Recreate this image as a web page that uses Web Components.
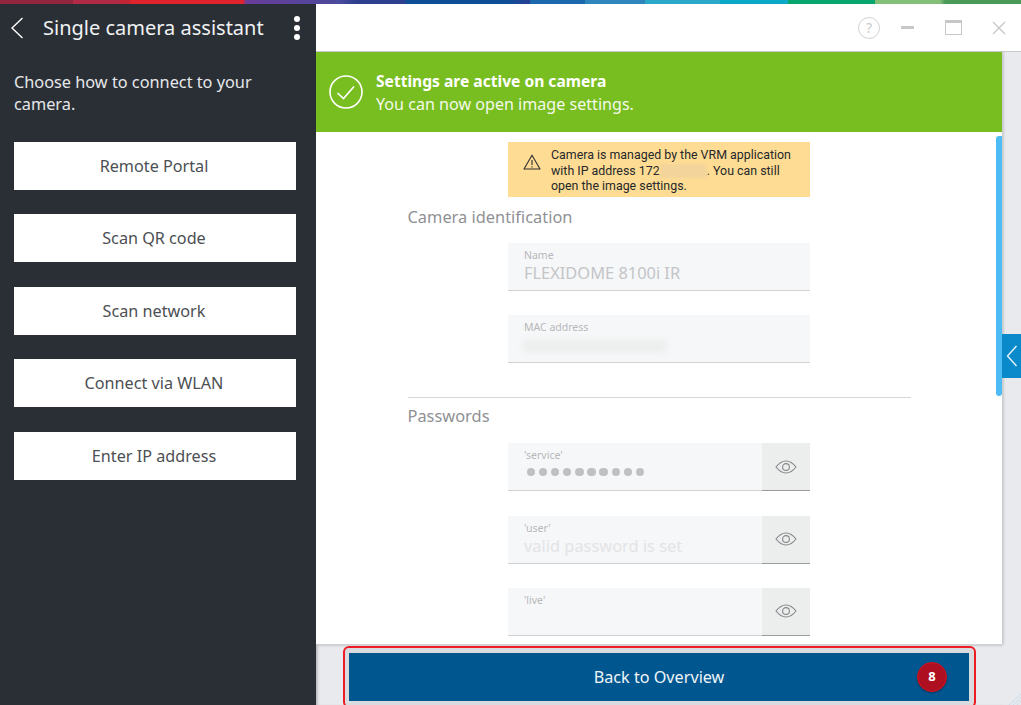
<!DOCTYPE html>
<html lang="en">
<head>
<meta charset="utf-8">
<title>Single camera assistant</title>
<style>
html, body { margin: 0; height: 100%; }
body { width: 1021px; height: 705px; overflow: hidden; font-family: "Noto Sans", "Open Sans", sans-serif; background: #fff; }
</style>
</head>
<body>
<app-shell>
  <side-panel slot="side" heading="Single camera assistant">
    <connect-button>Remote Portal</connect-button>
    <connect-button>Scan QR code</connect-button>
    <connect-button>Scan network</connect-button>
    <connect-button>Connect via WLAN</connect-button>
    <connect-button>Enter IP address</connect-button>
  </side-panel>
  <window-bar slot="bar"></window-bar>
  <status-banner slot="banner" title-text="Settings are active on camera">You can now open image settings.</status-banner>
  <section-form slot="content">
    <warning-note>Camera is managed by the VRM application<br>with IP address 172<span class="ip"></span>. You can still<br>open the image settings.</warning-note>
    <section-title>Camera identification</section-title>
    <form-field label="Name" value="FLEXIDOME 8100i IR"></form-field>
    <form-field label="MAC address" blurred></form-field>
    <section-rule></section-rule>
    <section-title second>Passwords</section-title>
    <form-field label="'service'" dots eye></form-field>
    <form-field label="'user'" value="valid password is set" faint eye></form-field>
    <form-field label="'live'" eye></form-field>
  </section-form>
  <footer-bar slot="footer" count="8">Back to Overview</footer-bar>
</app-shell>

<script>
// Icons used more than once
const eyeIcon = `<svg width="22" height="14" viewBox="0 0 22 14" fill="none" stroke="#85878a" stroke-width="1.1">
  <path d="M1 7 C4.5 2.5 7.5 1 11 1 C14.5 1 17.5 2.5 21 7 C17.5 11.5 14.5 13 11 13 C7.5 13 4.5 11.5 1 7 Z"/>
  <circle cx="11" cy="7" r="3.4"/>
</svg>`;

class AppShell extends HTMLElement {
    constructor() {
        super();
        this.attachShadow({ mode: 'open' });
        this.shadowRoot.innerHTML = /*html*/`
        <style>
        :host { display: block; width: 1021px; height: 705px; position: relative; overflow: hidden; }
        .strip {
            height: 4px;
            background: linear-gradient(90deg,
                #93263f 0, #93263f 73px, #b02a45 73px, #b02a45 120px, #c02535 120px, #c02535 130px,
                #e0242e 130px, #e0242e 243px, #6a3d9a 246px, #4a4a9c 340px, #2f3f8f 355px, #2f3f8f 405px,
                #0f4d94 405px, #0f4d94 508px, #263f94 530px, #1c68ad 530px, #1c68ad 585px, #2f86bc 585px, #2f86bc 645px,
                #2ba7c9 645px, #2ba7c9 720px, #0ba8c8 720px, #0ba8c8 788px, #08a66f 788px, #08a66f 875px,
                #84bf78 875px, #84bf78 940px, #4b9a5a 945px, #4b9a5a 1021px);
        }
        .body { display: flex; height: 701px; }
        .side { width: 316px; flex: none; }
        .main { flex: 1; display: flex; flex-direction: column; min-width: 0; background: #e9eaee; position: relative; box-shadow: inset 3px 0 3px -2px #b9bbbe; }
        .bar { height: 47px; flex: none; background: #fff; border-bottom: 1px solid #c8c9cb; }
        .panel { width: 686px; flex: 1; display: flex; flex-direction: column; min-height: 0; background: #fff; box-shadow: 2px 0 2px #c9cbce; position: relative; }
        .content { flex: 1; min-height: 0; overflow: hidden; }
        .foot { height: 61px; flex: none; margin-top: -1px; position: relative; }
        .thumb { position: absolute; left: 680px; top: 84px; width: 6px; height: 260px; border-radius: 3px 0 3px 3px; background: #4dbcf5; }
        .tab { position: absolute; right: 0; top: 330px; width: 19px; height: 44px; background: #0a8acb; display: flex; align-items: center; justify-content: center; }
        .grip { position: absolute; right: 0; bottom: 0; }
        </style>
        <div class="strip"></div>
        <div class="body">
            <div class="side"><slot name="side"></slot></div>
            <div class="main">
                <div class="bar"><slot name="bar"></slot></div>
                <div class="panel">
                    <slot name="banner"></slot>
                    <div class="content"><slot name="content"></slot></div>
                    <div class="thumb"></div>
                </div>
                <div class="foot"><slot name="footer"></slot></div>
                <div class="tab">
                    <svg width="12" height="22" viewBox="0 0 12 22" fill="none" stroke="#e8f4fb" stroke-width="1.4"><path d="M10.5 1 L1.5 11 L10.5 21"/></svg>
                </div>
                <svg class="grip" width="12" height="11" viewBox="0 0 12 11" stroke="#c9dcec" stroke-width="1"><path d="M0 11 L12 0 M4 11 L12 3.5 M8 11 L12 7"/></svg>
            </div>
        </div>`;
    }
}

class SidePanel extends HTMLElement {
    constructor() {
        super();
        this.attachShadow({ mode: 'open' });
    }

    connectedCallback() {
        this.shadowRoot.innerHTML = /*html*/`
        <style>
        :host { display: block; height: 100%; background: #2a2f36; color: #f1f2f3; }
        header { display: flex; align-items: center; height: 48px; padding: 0 14px 0 10px; }
        header svg.back { flex: none; }
        h1 { flex: 1; margin: -2px 0 0 19px; font-size: 20px; font-weight: 400; white-space: nowrap; }
        .more { display: flex; flex-direction: column; gap: 3px; width: 6px; margin-right: 2px; }
        .more i { width: 6px; height: 6px; border-radius: 50%; background: #fff; }
        p { margin: 20px 14px 0; font-size: 16.3px; line-height: 21.7px; color: #e6e7e9; }
        .list { display: flex; flex-direction: column; gap: 24.4px; margin: 26.6px 20px 0 14px; }
        </style>
        <header>
            <svg class="back" width="14" height="24" viewBox="0 0 14 24" fill="none" stroke="#fff" stroke-width="1.4"><path d="M12.5 2 L2 12 L12.5 22"/></svg>
            <h1>${this.getAttribute('heading')}</h1>
            <div class="more"><i></i><i></i><i></i></div>
        </header>
        <p>Choose how to connect to your camera.</p>
        <div class="list"><slot></slot></div>`;
    }
}

class ConnectButton extends HTMLElement {
    constructor() {
        super();
        this.attachShadow({ mode: 'open' });
        this.shadowRoot.innerHTML = /*html*/`
        <style>
        :host { display: flex; align-items: center; justify-content: center; height: 48px; padding-right: 2px; box-sizing: border-box; background: #fff; color: #4c4f53; font-size: 16.2px; }
        </style>
        <slot></slot>`;
    }
}

class WindowBar extends HTMLElement {
    constructor() {
        super();
        this.attachShadow({ mode: 'open' });
        this.shadowRoot.innerHTML = /*html*/`
        <style>
        :host { display: flex; align-items: center; justify-content: flex-end; height: 100%; }
        .help { width: 20px; height: 20px; border: 1.5px solid #d2d3d5; border-radius: 50%; color: #c9cacc; font-size: 14px; line-height: 20px; text-align: center; margin-right: 21px; }
        .min { width: 13px; height: 3px; background: #c6c7c9; margin-right: 31px; }
        .max { width: 15px; height: 11px; border: 1px solid #c6c7c9; border-top-width: 3px; margin-right: 30px; box-sizing: content-box; }
        .close { margin-right: 15px; }
        </style>
        <div class="help">?</div>
        <div class="min"></div>
        <div class="max"></div>
        <svg class="close" width="14" height="14" viewBox="0 0 14 14" stroke="#c6c7c9" stroke-width="1.3"><path d="M1 1 L13 13 M13 1 L1 13"/></svg>`;
    }
}

class StatusBanner extends HTMLElement {
    constructor() {
        super();
        this.attachShadow({ mode: 'open' });
    }

    connectedCallback() {
        this.shadowRoot.innerHTML = /*html*/`
        <style>
        :host { display: flex; align-items: center; height: 80px; flex: none; background: #78be20; color: #f4f9ea; padding-left: 13px; box-sizing: border-box; font-size: 16.1px; line-height: 23px; }
        svg { flex: none; margin-right: 13px; }
        .text { margin-top: 2px; }
        b { display: block; font-size: 15.6px; font-weight: 700; color: #fff; }
        </style>
        <svg width="34" height="34" viewBox="0 0 34 34" fill="none" stroke="#fff" stroke-width="1.6"><circle cx="17" cy="17" r="16"/><path d="M8.5 18 L14.5 23.5 L25 11.5"/></svg>
        <div class="text"><b>${this.getAttribute('title-text')}</b><slot></slot></div>`;
    }
}

class SectionForm extends HTMLElement {
    constructor() {
        super();
        this.attachShadow({ mode: 'open' });
        this.shadowRoot.innerHTML = /*html*/`
        <style>
        :host { display: flex; flex-direction: column; align-items: center; padding-top: 10px; }
        </style>
        <slot></slot>`;
    }
}

class WarningNote extends HTMLElement {
    constructor() {
        super();
        this.attachShadow({ mode: 'open' });
        this.shadowRoot.innerHTML = /*html*/`
        <style>
        :host { display: flex; width: 302px; height: 55px; box-sizing: border-box; background: #ffdc93; color: #26282b; font-family: Roboto, "Noto Sans", sans-serif; font-size: 12.4px; line-height: 15.6px; white-space: nowrap; padding: 5px 8px 0 15px; }
        svg { flex: none; margin: 7px 10px 0 0; }
        ::slotted(.ip) { display: inline-block; width: 47px; height: 14px; vertical-align: -3px; background: #f3d49b; filter: blur(1.5px); }
        </style>
        <svg width="18" height="16" viewBox="0 0 18 16" fill="none" stroke="#2b2d30" stroke-width="1.1"><path d="M9 1.2 L17 15 H1 Z" stroke-linejoin="round"/><path d="M9 6 V11 M9 12.2 V13.6"/></svg>
        <div><slot></slot></div>`;
    }
}

class SectionTitle extends HTMLElement {
    constructor() {
        super();
        this.attachShadow({ mode: 'open' });
        this.shadowRoot.innerHTML = /*html*/`
        <style>
        :host { display: block; width: 503px; color: #8f9194; font-size: 16.4px; line-height: 22px; padding: 9px 0 15px; }
        :host([second]) { padding: 7.4px 0 16px; }
        </style>
        <slot></slot>`;
    }
}

class SectionRule extends HTMLElement {
    constructor() {
        super();
        this.attachShadow({ mode: 'open' });
        this.shadowRoot.innerHTML = /*html*/`
        <style>
        :host { display: block; width: 503px; height: 1px; background: #d5d6d8; margin-top: 9px; }
        </style>`;
    }
}

class FormField extends HTMLElement {
    constructor() {
        super();
        this.attachShadow({ mode: 'open' });
    }

    connectedCallback() {
        const label = this.getAttribute('label') || '';
        const value = this.getAttribute('value') || '';
        let inner = `<div class="value">${value}</div>`;
        if (this.hasAttribute('dots')) {
            inner = `<div class="dots">${'<i></i>'.repeat(10)}</div>`;
        }
        if (this.hasAttribute('blurred')) {
            inner = `<div class="blur"></div>`;
        }
        const eye = this.hasAttribute('eye') ? `<div class="eye">${eyeIcon}</div>` : '';
        this.shadowRoot.innerHTML = /*html*/`
        <style>
        :host { display: flex; width: 302px; height: 48px; margin-bottom: 24.4px; flex: none; }
        .box { flex: 1; min-width: 0; background: #f6f7f8; border-bottom: 1px solid #d0d1d3; padding: 5px 16px 0; box-sizing: border-box; }
        label { display: block; font-size: 10.5px; line-height: 14px; color: #b6b8ba; }
        .value { font-size: 16.4px; line-height: 22px; margin-top: 0; color: #c3c5c7; white-space: nowrap; }
        :host([faint]) .value { color: #e3e4e6; }
        .dots { display: flex; gap: 3.9px; padding: 6px 3px 0; }
        .dots i { width: 8.2px; height: 8.2px; border-radius: 50%; background: #bfc0c2; }
        .blur { width: 144px; height: 12px; margin: 6px 0 0 -1px; background: #eceded; filter: blur(3px); }
        .eye { width: 48px; flex: none; display: flex; align-items: center; justify-content: center; background: #eceded; border-bottom: 1px solid #9a9c9f; box-sizing: border-box; }
        </style>
        <div class="box"><label>${label}</label>${inner}</div>${eye}`;
    }
}

class FooterBar extends HTMLElement {
    constructor() {
        super();
        this.attachShadow({ mode: 'open' });
    }

    connectedCallback() {
        this.shadowRoot.innerHTML = /*html*/`
        <style>
        :host { display: block; height: 100%; width: 686px; box-sizing: border-box; padding: 2px 26px 0 27px; box-shadow: inset 0 3px 3px -2px #b9bbbe, inset 3px 0 3px -2px #b9bbbe; }
        .frame { height: 62px; box-sizing: border-box; border: 2px solid #ee1c25; border-radius: 6px; background: #d9dbde; padding: 5px 5px 0 4px; }
        .btn { height: 48px; background: #00568f; color: #f0f5f9; display: flex; align-items: center; justify-content: center; font-size: 16.2px; padding-bottom: 1px; box-sizing: border-box; position: relative; }
        .badge { position: absolute; left: 568px; top: 9px; width: 30px; height: 30px; box-sizing: border-box; border-radius: 50%; background: #ae1022; border: 1.5px solid #d81420; color: #fff; font-size: 13px; font-weight: 700; text-align: center; line-height: 27px; box-shadow: 0 1px 2px rgba(0,0,0,.35); }
        </style>
        <div class="frame"><div class="btn"><slot></slot><span class="badge">${this.getAttribute('count')}</span></div></div>`;
    }
}

window.customElements.define('app-shell', AppShell);
window.customElements.define('side-panel', SidePanel);
window.customElements.define('connect-button', ConnectButton);
window.customElements.define('window-bar', WindowBar);
window.customElements.define('status-banner', StatusBanner);
window.customElements.define('section-form', SectionForm);
window.customElements.define('warning-note', WarningNote);
window.customElements.define('section-title', SectionTitle);
window.customElements.define('section-rule', SectionRule);
window.customElements.define('form-field', FormField);
window.customElements.define('footer-bar', FooterBar);
</script>
</body>
</html>
